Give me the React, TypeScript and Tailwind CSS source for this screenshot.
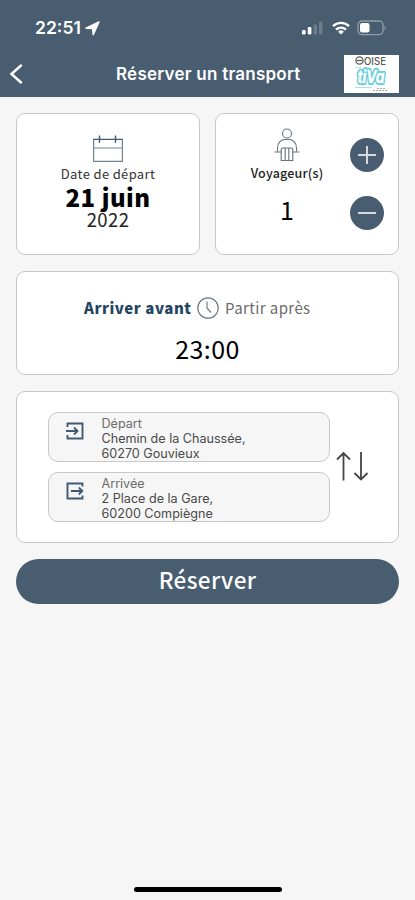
import type { ReactNode } from "react";

const sans = "font-['Noto_Sans_CJK_JP','Noto_Sans',sans-serif]";
const inter = "font-['Inter',sans-serif]";

type CardProps = {
  className?: string;
  children: ReactNode;
};

function Card({ className = "", children }: CardProps) {
  return (
    <div className={`rounded-[9px] border-[1.5px] border-[#c8c8c8] bg-white ${className}`}>
      {children}
    </div>
  );
}

function StatusBar() {
  return (
    <div className="flex h-[51px] items-start justify-between pt-[16px] pr-[28px] pl-[35px] text-white">
      <div className="flex h-[24px] items-center">
        <span className="text-[17.5px] leading-6 font-semibold">22:51</span>
        <svg className="ml-[4px]" width="15" height="15" viewBox="0 0 15 15" fill="currentColor">
          <path d="M14 1 8.2 13.6 7.6 7.4 1 7.2Z" stroke="currentColor" strokeWidth="1.5" strokeLinejoin="round" />
        </svg>
      </div>
      <div className="flex h-[24px] items-center">
        <svg width="22" height="14" viewBox="0 0 22 14" fill="currentColor">
          <rect x="0" y="9" width="3.6" height="4.5" rx="1.2" />
          <rect x="5.8" y="6" width="3.6" height="7.5" rx="1.2" />
          <rect x="11.6" y="3.5" width="3.4" height="10" rx="1" opacity=".2" />
          <rect x="17" y="0.5" width="3.4" height="13" rx="1" opacity=".2" />
        </svg>
        <svg className="ml-[8px]" width="18" height="14" viewBox="0 0 18 14" fill="none" stroke="currentColor" strokeWidth="2.4">
          <path d="M1 5.2a11.4 11.4 0 0 1 16 0" />
          <path d="M4 8.6a7.2 7.2 0 0 1 10 0" />
          <path d="m9 13.6-2.9-2.9a4.1 4.1 0 0 1 5.8 0Z" fill="currentColor" stroke="none" />
        </svg>
        <svg className="ml-[7px]" width="30" height="16" viewBox="0 0 30 16" fill="none">
          <rect x="1" y="1" width="25" height="13.6" rx="4" stroke="#fff" strokeOpacity=".4" strokeWidth="1.3" />
          <rect x="3" y="3" width="9.5" height="9.6" rx="2" fill="#fff" />
          <path d="M27.6 5.5c1.6.8 1.6 3.8 0 4.6Z" fill="#fff" fillOpacity=".45" />
        </svg>
      </div>
    </div>
  );
}

function Logo() {
  return (
    <svg className="block bg-white" width="55" height="38" viewBox="0 0 55 38">
      <g fill="none" stroke="#5c5c5c" strokeWidth="1.3">
        <circle cx="15.5" cy="5.5" r="3.6" />
        <path d="M13 5.5h5" />
      </g>
      <text x="20" y="9.5" fontSize="10" fontWeight="500" textLength="22" lengthAdjust="spacingAndGlyphs" fill="#555" fontFamily="Inter">
        OISE
      </text>
      <g fontFamily="Inter" fontWeight="700" fontStyle="italic" fontSize="18" strokeLinejoin="round">
        <text x="13.5" y="28" textLength="27" lengthAdjust="spacingAndGlyphs" fill="#5fcdd5" stroke="#5fcdd5" strokeWidth="4">
          tiVa
        </text>
        <text x="13.5" y="28" textLength="27" lengthAdjust="spacingAndGlyphs" fill="#fff" stroke="#fff" strokeWidth=".4">
          tiVa
        </text>
      </g>
      <path d="M12 12.5h5M11 32.5h17" stroke="#a5e3e8" />
      <path d="M29 35.5h15M33 33.5h9" stroke="#aaa" strokeDasharray="2 1" />
    </svg>
  );
}

function CalendarIcon() {
  return (
    <svg width="32" height="28" viewBox="0 0 32 28" fill="none" stroke="#718492" strokeWidth="1.2">
      <path d="M1.6 4.2V26.4H30.4V4.2M1.6 13H30.4" />
      <path d="M1.2 4.4h29.6M7.5.5v7.2M23.5.5v7.2" stroke="#3e5a70" strokeWidth="1.4" />
    </svg>
  );
}

function TravellerIcon() {
  return (
    <svg width="26" height="34" viewBox="0 0 26 34" fill="none" stroke="#65727c" strokeWidth="1.1">
      <circle cx="13" cy="5.5" r="4.5" />
      <path d="M3.5 23.5V20.5C3.5 14.5 7.3 11.3 13 11.3S22.5 14.5 22.5 20.5V23.5" />
      <path d="M.5 24H7.2M18.8 24H25.5" />
      <path d="M7.2 32.5V21.5Q7.2 20 8.8 20H17.2Q18.8 20 18.8 21.5V32.5ZM11.2 20.5V32.5M14.8 20.5V32.5" />
    </svg>
  );
}

function RoundButton({ label, path }: { label: string; path: string }) {
  return (
    <button aria-label={label} className="flex size-[34px] items-center justify-center rounded-full bg-[#485d70]">
      <svg width="18" height="18" viewBox="0 0 18 18" stroke="#d3d9de" strokeWidth="2">
        <path d={path} />
      </svg>
    </button>
  );
}

type StopProps = {
  label: string;
  street: string;
  city: string;
  icon: ReactNode;
};

function Stop({ label, street, city, icon }: StopProps) {
  return (
    <div className="flex h-[50px] w-[282px] rounded-[10px] border-[1.5px] border-[#c8c8c8] bg-[#f6f6f6] pl-[17px]">
      <svg className="mt-[9px] shrink-0" width="18" height="18" viewBox="0 0 18 18" fill="none" stroke="#3f5b73" strokeWidth="1.9">
        {icon}
      </svg>
      <div className={`ml-[18px] pt-[3px] text-[12.6px] leading-[15.2px] whitespace-nowrap text-[#4a4a4a] ${inter}`}>
        <p className="text-[#6c6c6c]">{label}</p>
        <p>{street}</p>
        <p>{city}</p>
      </div>
    </div>
  );
}

export default function App() {
  return (
    <div className={`flex h-[900px] w-[415px] flex-col overflow-hidden bg-[#f6f6f6] text-black ${sans}`}>
      <header className={`h-[97px] shrink-0 bg-[#485d70] ${inter}`}>
        <StatusBar />
        <div className="flex h-[46px] items-center pr-[16px] pl-[9px]">
          <svg width="14" height="22" viewBox="0 0 14 22" fill="none" stroke="#fff" strokeWidth="2.5" strokeLinecap="round">
            <path d="M12 2.5 2.5 11l9.5 8.5" />
          </svg>
          <h1 className="ml-[93px] flex-1 text-[17px] leading-6 font-semibold tracking-[0.25px] whitespace-nowrap text-white">
            Réserver un transport
          </h1>
          <Logo />
        </div>
      </header>

      <main className="flex flex-col gap-[16px] px-[16px] pt-[16px]">
        <div className="grid grid-cols-2 gap-[15px]">
          <Card className="flex h-[142px] flex-col items-center pt-[20.5px]">
            <CalendarIcon />
            <p className="mt-[3px] text-[13px] leading-4 tracking-[0.35px] whitespace-nowrap text-[#333]">Date de départ</p>
            <p className="mt-[3px] text-[24px] leading-6 font-black tracking-[0.5px]">21 juin</p>
            <p className="text-[18.5px] leading-5 tracking-[0.4px] text-[#222]">2022</p>
          </Card>
          <Card className="flex h-[142px] justify-between pr-[14.5px] pl-[32px]">
            <div className="flex w-[78px] flex-col items-center pt-[14px]">
              <TravellerIcon />
              <p className="mt-[3px] text-[12.5px] leading-4 font-medium tracking-[0.2px] whitespace-nowrap text-[#222]">
                Voyageur(s)
              </p>
              <p className="mt-[16px] text-[25px] leading-6">1</p>
            </div>
            <div className="flex flex-col gap-[24px] pt-[23.5px]">
              <RoundButton label="Ajouter" path="M9 0V18M0 9H18" />
              <RoundButton label="Retirer" path="M0 9H18" />
            </div>
          </Card>
        </div>

        <Card className="h-[104px] pt-[24px]">
          <div className="flex h-[24px] items-center pl-[67px] text-[15px] leading-6 whitespace-nowrap">
            <span className="w-[106px] font-black tracking-[0.55px] text-[#24455f]">Arriver avant</span>
            <svg className="mr-[6px] ml-[7px]" width="22" height="22" viewBox="0 0 22 22" fill="none" stroke="#6f7d88" strokeWidth="1.2">
              <circle cx="11" cy="11" r="10.2" />
              <path d="M10 4.5V11l4 4.5" />
            </svg>
            <span className="tracking-[0.4px] text-[#6c6c6c]">Partir après</span>
          </div>
          <p className="mt-[15px] text-center text-[25px] leading-[26px] tracking-[0.4px]">23:00</p>
        </Card>

        <Card className="flex h-[152px] items-start pt-[19.5px] pl-[30.5px]">
          <div className="flex flex-col gap-[10.5px]">
            <Stop
              label="Départ"
              street="Chemin de la Chaussée,"
              city="60270 Gouvieux"
              icon={<path d="M1.5 5V1.5h15v15h-15V13M0 9h11M8 5.5 11.5 9 8 12.5" />}
            />
            <Stop
              label="Arrivée"
              street="2 Place de la Gare,"
              city="60200 Compiègne"
              icon={<path d="M16.5 4.5v-3h-15v15h15v-3M5 9h11M12.8 5.5 16.3 9l-3.5 3.5" />}
            />
          </div>
          <svg className="mt-[39px] ml-[6px]" width="34" height="32" viewBox="0 0 34 32" fill="none" stroke="#444" strokeWidth="1.8">
            <path d="M7.5 1.5v28M1 8.5l6.5-6.5 6.5 6.5" />
            <path d="M25 1v27.5M18.5 22l6.5 6.5 6.5-6.5" />
          </svg>
        </Card>

        <button className="h-[45px] rounded-full bg-[#485d70] pb-[6px] text-[22.5px] leading-[38px] font-medium tracking-[0.4px] text-white">
          Réserver
        </button>
      </main>

      <div className="mx-auto mt-auto mb-[8px] h-[5px] w-[148px] shrink-0 rounded-full bg-black" />
    </div>
  );
}
